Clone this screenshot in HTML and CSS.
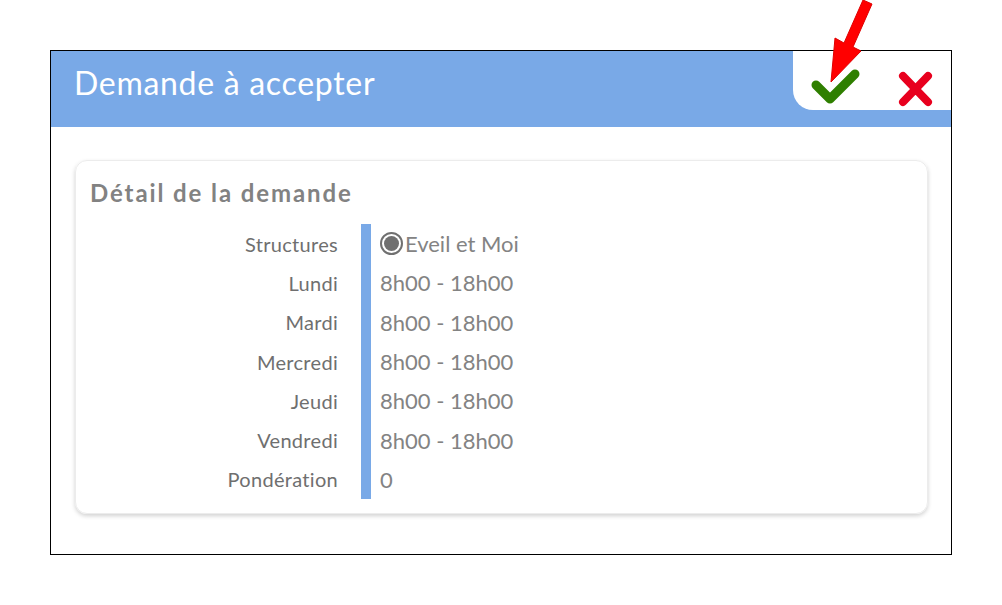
FILE: index.html
```html
<!DOCTYPE html>
<html lang="fr">
<head>
<meta charset="utf-8">
<title>Demande à accepter</title>
<link rel="stylesheet" href="styles.css">
</head>
<body>
<div class="frame">
  <div class="header">
    <h1 class="title">Demande à accepter</h1>
    <div class="actions">
      <svg class="icon check" width="50" height="40" viewBox="0 0 50 40">
        <polyline points="6,17 20,31 45,6" fill="none" stroke="#2f7f00" stroke-width="9" stroke-linecap="round" stroke-linejoin="round"/>
      </svg>
      <svg class="icon cross" width="40" height="40" viewBox="0 0 40 40">
        <path d="M8 8 L33 34 M33 8 L8 34" fill="none" stroke="#e8001e" stroke-width="8" stroke-linecap="round"/>
      </svg>
    </div>
  </div>
  <div class="content">
    <div class="card">
      <h2 class="card-title">Détail de la demande</h2>
      <div class="details">
        <div class="labels">
          <div class="row">Structures</div>
          <div class="row">Lundi</div>
          <div class="row">Mardi</div>
          <div class="row">Mercredi</div>
          <div class="row">Jeudi</div>
          <div class="row">Vendredi</div>
          <div class="row">Pondération</div>
        </div>
        <div class="values">
          <div class="row"><span class="radio"><span class="dot"></span></span>Eveil et Moi</div>
          <div class="row">8h00 - 18h00</div>
          <div class="row">8h00 - 18h00</div>
          <div class="row">8h00 - 18h00</div>
          <div class="row">8h00 - 18h00</div>
          <div class="row">8h00 - 18h00</div>
          <div class="row">0</div>
        </div>
      </div>
    </div>
  </div>
</div>
<svg class="arrow" width="1002" height="100" viewBox="0 0 1002 100">
  <polygon points="863,0 872,4 853,47 861,51 831,82 835,38 844,43" fill="#ff0000" stroke="#e00000" stroke-width="1"/>
</svg>
</body>
</html>
```
FILE: styles.css
```css
html, body {
  margin: 0;
  padding: 0;
  background: #ffffff;
}
body {
  width: 1002px;
  height: 605px;
  position: relative;
  font-family: "Lato", "Liberation Sans", sans-serif;
  overflow: hidden;
}
.frame {
  margin: 50px 0 0 50px;
  width: 900px;
  height: 503px;
  border: 1px solid #000;
  background: #fff;
}
.header {
  height: 76px;
  background: #79a9e7;
  display: flex;
  justify-content: space-between;
  align-items: flex-start;
}
.title {
  margin: 0;
  padding: 14px 0 0 23px;
  font-size: 32px;
  font-weight: 400;
  color: #ffffff;
  line-height: 36px;
  letter-spacing: 0.7px;
}
.actions {
  width: 158px;
  height: 59px;
  background: #fff;
  border-bottom-left-radius: 20px;
  display: flex;
  align-items: flex-start;
  padding-left: 17px;
  box-sizing: border-box;
}
.icon {
  display: block;
  flex: none;
}
.check {
  margin-top: 17px;
}
.cross {
  margin-top: 17px;
  margin-left: 35px;
}
.content {
  padding: 33px 23px 0 24px;
}
.card {
  height: 354px;
  box-sizing: border-box;
  border-radius: 12px;
  border: 1px solid #ececec;
  box-shadow: 0 2px 4px rgba(0,0,0,0.18);
  padding: 19px 0 0 0;
}
.card-title {
  margin: 0 0 18px 14px;
  font-size: 24px;
  line-height: 26px;
  font-weight: 700;
  letter-spacing: 1.9px;
  color: #828282;
}
.details {
  display: flex;
}
.labels {
  width: 262px;
  text-align: right;
  color: #6f6f6f;
  font-size: 20px;
  letter-spacing: 0.3px;
}
.values {
  margin-left: 23px;
  border-left: 10px solid #79a9e7;
  padding-left: 9px;
  color: #838383;
  font-size: 22px;
}
.row {
  height: 39.3px;
  display: flex;
  align-items: center;
}
.labels .row {
  justify-content: flex-end;
}
.radio {
  width: 19px;
  height: 19px;
  border: 2px solid #707070;
  border-radius: 50%;
  display: inline-flex;
  align-items: center;
  justify-content: center;
  margin: 0 2px 0 0;
}
.dot {
  width: 15px;
  height: 15px;
  border-radius: 50%;
  background: #707070;
}
.arrow {
  position: absolute;
  left: 0;
  top: 0;
}
```
